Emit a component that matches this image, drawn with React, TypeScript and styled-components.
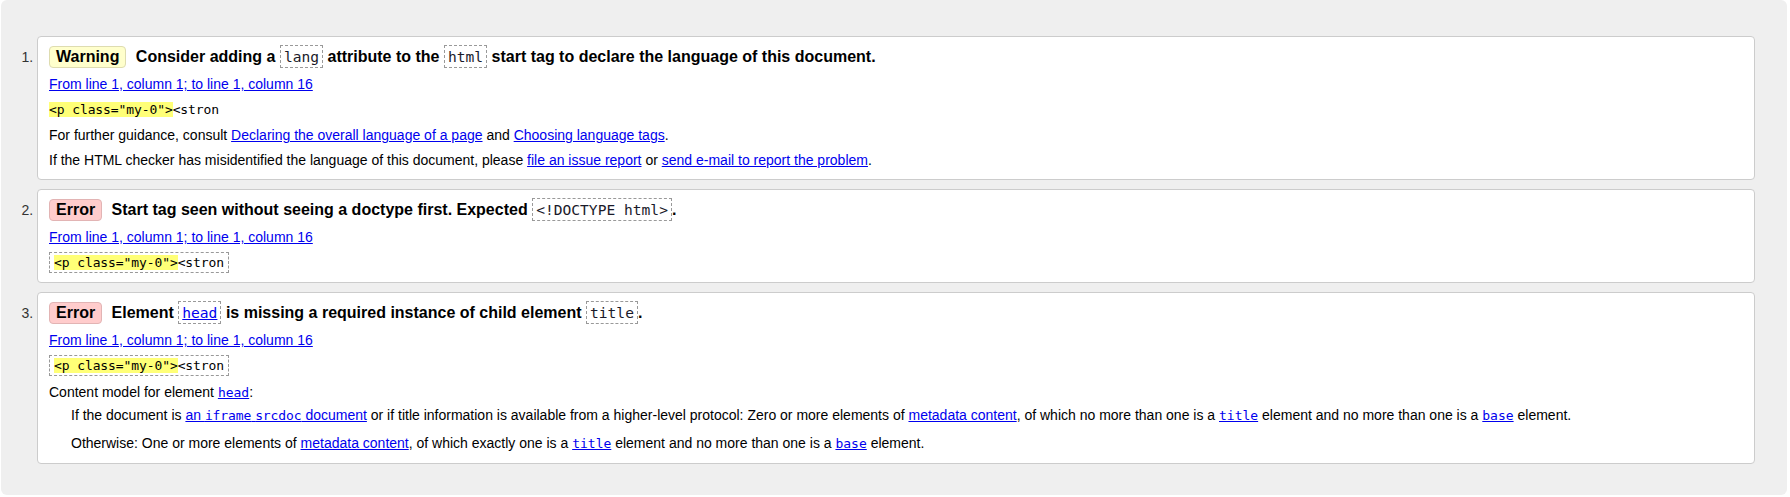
import styled, { createGlobalStyle } from "styled-components";

const GlobalStyle = createGlobalStyle`
  html, body {
    margin: 0;
    padding: 0;
    background: #ffffff;
  }
  body {
    font-family: "Liberation Sans", Arial, sans-serif;
    font-size: 14px;
    color: #000;
  }
`;

const MONO = `"DejaVu Sans Mono", "Liberation Mono", monospace`;

const Panel = styled.div`
  margin: 0 3px 0 1px;
  height: 495px;
  box-sizing: border-box;
  padding-top: 36px;
  background: #efefef;
  border-radius: 6px;
`;

const MessageList = styled.ol`
  margin: 0 32px 0 0;
  padding: 0 0 0 36px;
  list-style: decimal outside;
  color: #333;
`;

const Message = styled.li`
  background: #fff;
  border: 1px solid #cccccc;
  border-radius: 4px;
  padding: 7px 11px 10px 11px;
  margin-bottom: 9px;
  color: #000;

  &::marker {
    color: #333;
    font-size: 14px;
  }
`;

const Heading = styled.p`
  margin: 0;
  font-size: 16px;
  font-weight: bold;
  line-height: 26px;
`;

const Badge = styled.span<{ $kind: "warning" | "error" }>`
  display: inline-block;
  padding: 0 6px;
  margin-right: 5px;
  line-height: 20px;
  border-radius: 4px;
  border: 1px solid ${(p) => (p.$kind === "warning" ? "#dedcb0" : "#e2b4b4")};
  background: ${(p) => (p.$kind === "warning" ? "#ffffcc" : "#ffcccc")};
`;

const Code = styled.code`
  font-family: ${MONO};
  font-weight: normal;
  font-size: 13px;
  letter-spacing: -0.1px;
`;

const BoxedCode = styled.code`
  font-family: ${MONO};
  font-weight: normal;
  font-size: 14.6px;
  color: #1a1a2a;
  border: 1px dashed #999;
  padding: 2px 3px;
`;

const Line = styled.p<{ $gap?: number }>`
  margin: ${(p) => p.$gap ?? 7}px 0 0;
  line-height: 18px;
`;

const Extract = styled.span<{ $boxed?: boolean }>`
  font-family: ${MONO};
  font-size: 13px;
  letter-spacing: -0.1px;
  ${(p) =>
    p.$boxed &&
    `
    border: 1px dashed #999;
    padding: 2px 4px;
  `}
`;

const Mark = styled.mark`
  background: #ffff77;
  color: inherit;
`;

const A = styled.a`
  color: #0000ee;
  text-decoration: underline;
`;

const MonoA = styled(A)<{ $inherit?: boolean }>`
  font-family: ${MONO};
  font-size: ${(p) => (p.$inherit ? "inherit" : "13px")};
`;

const ModelList = styled.dl`
  margin: 8px 0 0;
`;

const ModelTerm = styled.dt`
  line-height: 18px;
`;

const ModelItem = styled.dd<{ $first?: boolean }>`
  margin: ${(p) => (p.$first ? "4px" : "9px")} 0 0 22px;
  line-height: 18px;
`;

const Location = () => <A href="#">From line 1, column 1; to line 1, column 16</A>;

const Snippet = ({ boxed }: { boxed?: boolean }) => (
  <Extract $boxed={boxed}>
    <Mark>&lt;p class="my-0"&gt;</Mark>&lt;stron
  </Extract>
);

export default function App() {
  return (
    <>
      <GlobalStyle />
      <Panel>
        <MessageList>
          <Message>
            <Heading>
              <Badge $kind="warning">Warning</Badge> Consider adding a <BoxedCode>lang</BoxedCode> attribute to
              the <BoxedCode>html</BoxedCode> start tag to declare the language of this document.
            </Heading>
            <Line $gap={5}>
              <Location />
            </Line>
            <Line>
              <Snippet />
            </Line>
            <Line>
              For further guidance, consult <A href="#">Declaring the overall language of a page</A> and{" "}
              <A href="#">Choosing language tags</A>.
            </Line>
            <Line>
              If the HTML checker has misidentified the language of this document, please{" "}
              <A href="#">file an issue report</A> or <A href="#">send e-mail to report the problem</A>.
            </Line>
          </Message>

          <Message>
            <Heading>
              <Badge $kind="error">Error</Badge> Start tag seen without seeing a doctype first. Expected{" "}
              <BoxedCode>&lt;!DOCTYPE html&gt;</BoxedCode>.
            </Heading>
            <Line $gap={5}>
              <Location />
            </Line>
            <Line>
              <Snippet boxed />
            </Line>
          </Message>

          <Message>
            <Heading>
              <Badge $kind="error">Error</Badge> Element{" "}
              <BoxedCode>
                <MonoA href="#" $inherit>
                  head
                </MonoA>
              </BoxedCode>{" "}
              is missing a required instance of child element <BoxedCode>title</BoxedCode>.
            </Heading>
            <Line $gap={5}>
              <Location />
            </Line>
            <Line>
              <Snippet boxed />
            </Line>
            <ModelList>
              <ModelTerm>
                Content model for element <MonoA href="#">head</MonoA>:
              </ModelTerm>
              <ModelItem $first>
                If the document is{" "}
                <A href="#">
                  an <Code>iframe</Code> <Code>srcdoc</Code> document
                </A>{" "}
                or if title information is available from a higher-level protocol: Zero or more elements of{" "}
                <A href="#">metadata content</A>, of which no more than one is a <MonoA href="#">title</MonoA>{" "}
                element and no more than one is a <MonoA href="#">base</MonoA> element.
              </ModelItem>
              <ModelItem>
                Otherwise: One or more elements of <A href="#">metadata content</A>, of which exactly one is a{" "}
                <MonoA href="#">title</MonoA> element and no more than one is a <MonoA href="#">base</MonoA>{" "}
                element.
              </ModelItem>
            </ModelList>
          </Message>
        </MessageList>
      </Panel>
    </>
  );
}
